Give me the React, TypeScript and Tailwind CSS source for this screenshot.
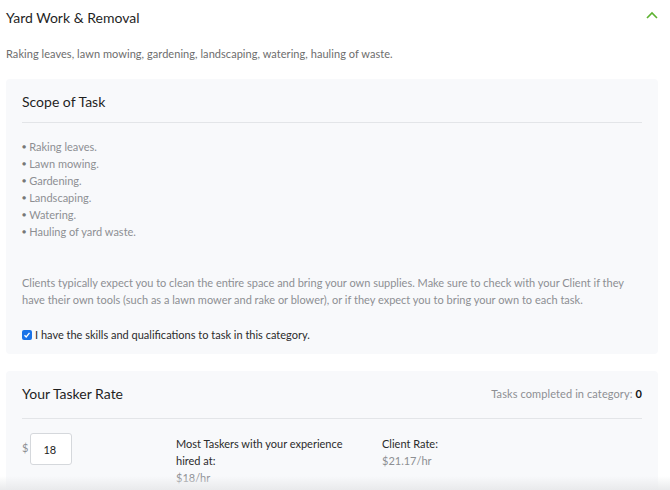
import React from "react";

export default function App() {
  const bullets = [
    "Raking leaves.",
    "Lawn mowing.",
    "Gardening.",
    "Landscaping.",
    "Watering.",
    "Hauling of yard waste.",
  ];
  return (
    <div
      className="relative w-[670px] h-[490px] overflow-hidden bg-white text-[#222]"
      style={{ fontFamily: "Lato, 'Liberation Sans', sans-serif" }}
    >
      <div className="flex items-center justify-between pl-[6px] pr-[12px] pt-[8px] h-[28px]">
        <div className="text-[14px] leading-[20px] text-[#1f1f1f]">Yard Work &amp; Removal</div>
        <svg width="12" height="8" viewBox="0 0 12 8" className="mb-[6px]">
          <path d="M1 7 L6 2 L11 7" fill="none" stroke="#5cb230" strokeWidth="1.6" />
        </svg>
      </div>
      <div className="pl-[6px] mt-[18px] text-[11px] leading-[16px] text-[#6d6d6d] tracking-[0.05px]">
        Raking leaves, lawn mowing, gardening, landscaping, watering, hauling of waste.
      </div>

      <div className="ml-[6px] mr-[12px] mt-[17px] bg-[#f8f9fb] rounded-[4px] px-[16px] pt-[13px] pb-[11px]">
        <div className="text-[14px] leading-[20px] text-[#1f1f1f] pb-[10px] border-b border-[#e3e5e8]">Scope of Task</div>
        <ul className="mt-[15px] text-[11px] leading-[17px] text-[#8d8f93]">
          {bullets.map((b) => (
            <li key={b} className="flex items-center">
              <span className="text-[7px] mr-[3px] text-[#777]">●</span>
              {b}
            </li>
          ))}
        </ul>
        <p className="mt-[34px] text-[11px] leading-[17px] text-[#8d8f93]">
          Clients typically expect you to clean the entire space and bring your own supplies. Make sure to check with your Client if they have their own tools (such as a lawn mower and rake or blower), or if they expect you to bring your own to each task.
        </p>
        <label className="mt-[19px] flex items-center gap-[3px] text-[11px] leading-[16px] text-[#2b2b2b]">
          <span className="w-[10px] h-[10px] rounded-[2px] bg-[#1a73e8] flex items-center justify-center">
            <svg width="8" height="8" viewBox="0 0 8 8">
              <path d="M1.5 4.2 L3.2 6 L6.5 1.8" fill="none" stroke="white" strokeWidth="1.3" />
            </svg>
          </span>
          I have the skills and qualifications to task in this category.
        </label>
      </div>

      <div className="ml-[6px] mr-[12px] mt-[17px] bg-[#f8f9fb] rounded-[4px] px-[16px] pt-[13px] pb-[20px]">
        <div className="flex items-center justify-between pb-[14px] border-b border-[#e3e5e8]">
          <div className="text-[14px] leading-[20px] text-[#1f1f1f]">Your Tasker Rate</div>
          <div className="text-[11px] text-[#8d8f93] tracking-[0.1px]">
            Tasks completed in category: <span className="font-bold text-[#111]">0</span>
          </div>
        </div>
        <div className="flex mt-[14px] text-[11px] leading-[17px]">
          <div className="w-[154px] flex items-start">
            <span className="text-[#8d8f93] mt-[6px] mr-[2px]">$</span>
            <div className="w-[42px] h-[32px] bg-white border border-[#d5d8dc] rounded-[3px] flex items-center pl-[12px] text-[#222]">18</div>
          </div>
          <div className="w-[206px] pt-[2px]">
            <div className="text-[#2b2b2b]">Most Taskers with your experience</div>
            <div className="text-[#2b2b2b]">hired at:</div>
            <div className="text-[#8d8f93]">$18/hr</div>
          </div>
          <div className="pt-[2px]">
            <div className="text-[#2b2b2b]">Client Rate:</div>
            <div className="text-[#8d8f93]">$21.17/hr</div>
          </div>
        </div>
      </div>

      <div className="absolute left-0 right-0 bottom-0 h-[14px] bg-gradient-to-b from-transparent to-[#e9eaec]" />
    </div>
  );
}
